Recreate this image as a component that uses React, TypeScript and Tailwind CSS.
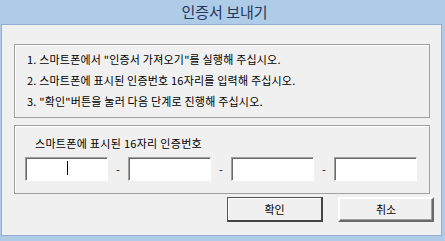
import React from 'react';

const steps = [
  '1. 스마트폰에서 "인증서 가져오기"를 실행해 주십시오.',
  '2. 스마트폰에 표시된 인증번호 16자리를 입력해 주십시오.',
  '3. "확인"버튼을 눌러 다음 단계로 진행해 주십시오.',
];

function CodeBox({ cursor }: { cursor?: boolean }) {
  return (
    <div className="relative w-[83px] h-[24px] bg-white border border-t-[#a0a0a0] border-l-[#a0a0a0] border-b-white border-r-white shadow-[inset_1px_1px_0_#696969]">
      {cursor && <div className="absolute left-[41px] top-[3px] w-[1px] h-[14px] bg-black" />}
    </div>
  );
}

export default function App() {
  return (
    <div
      className="w-[445px] h-[241px] bg-[#aecbe8] flex flex-col text-black"
      style={{ fontFamily: '"Noto Sans CJK KR", "Noto Sans", sans-serif' }}
    >
      {/* 제목 표시줄 */}
      <div className="h-[24px] flex items-center justify-center text-[15px] text-[#22385a] pl-[4px]">
        인증서 보내기
      </div>

      <div className="ml-[1px] w-[441px] h-[212px] bg-[#f0f0f0] border border-[#93aecf] pl-[12px] pr-[9px] pt-[19px] flex flex-col">
        {/* 안내 문구 */}
        <div className="w-[416px] h-[74px] border border-[#a0a0a0] shadow-[inset_1px_1px_0_#fff] pl-[12px] pt-[4px] text-[11px] leading-[21px] tracking-[0.2px]">
          {steps.map((s) => (
            <div key={s}>{s}</div>
          ))}
        </div>

        {/* 인증번호 입력 */}
        <div className="mt-[7px] w-[416px] h-[69px] border border-[#a0a0a0] shadow-[inset_1px_1px_0_#fff] pl-[10px] pt-[8px]">
          <div className="pl-[10px] text-[11px] leading-[18px] tracking-[0.3px]">스마트폰에 표시된 16자리 인증번호</div>
          <div className="mt-[5px] flex items-center">
            <CodeBox cursor />
            <div className="w-[20px] text-center text-[11px]">-</div>
            <CodeBox />
            <div className="w-[20px] text-center text-[11px]">-</div>
            <CodeBox />
            <div className="w-[20px] text-center text-[11px]">-</div>
            <CodeBox />
          </div>
        </div>

        {/* 버튼 */}
        <div className="mt-[3px] flex justify-end gap-[15px]">
          <button className="w-[96px] h-[25px] bg-[#f0f0f0] border border-[#555] border-r-2 border-b-2 border-r-[#444] border-b-[#444] shadow-[inset_1px_1px_0_#fff] text-[11px]">
            확인
          </button>
          <button className="w-[96px] h-[25px] bg-[#f0f0f0] border-2 border-t-white border-l-white border-b-[#696969] border-r-[#696969] shadow-[inset_-1px_-1px_0_#a0a0a0] text-[11px] mr-[-2px]">
            취소
          </button>
        </div>
      </div>
    </div>
  );
}
